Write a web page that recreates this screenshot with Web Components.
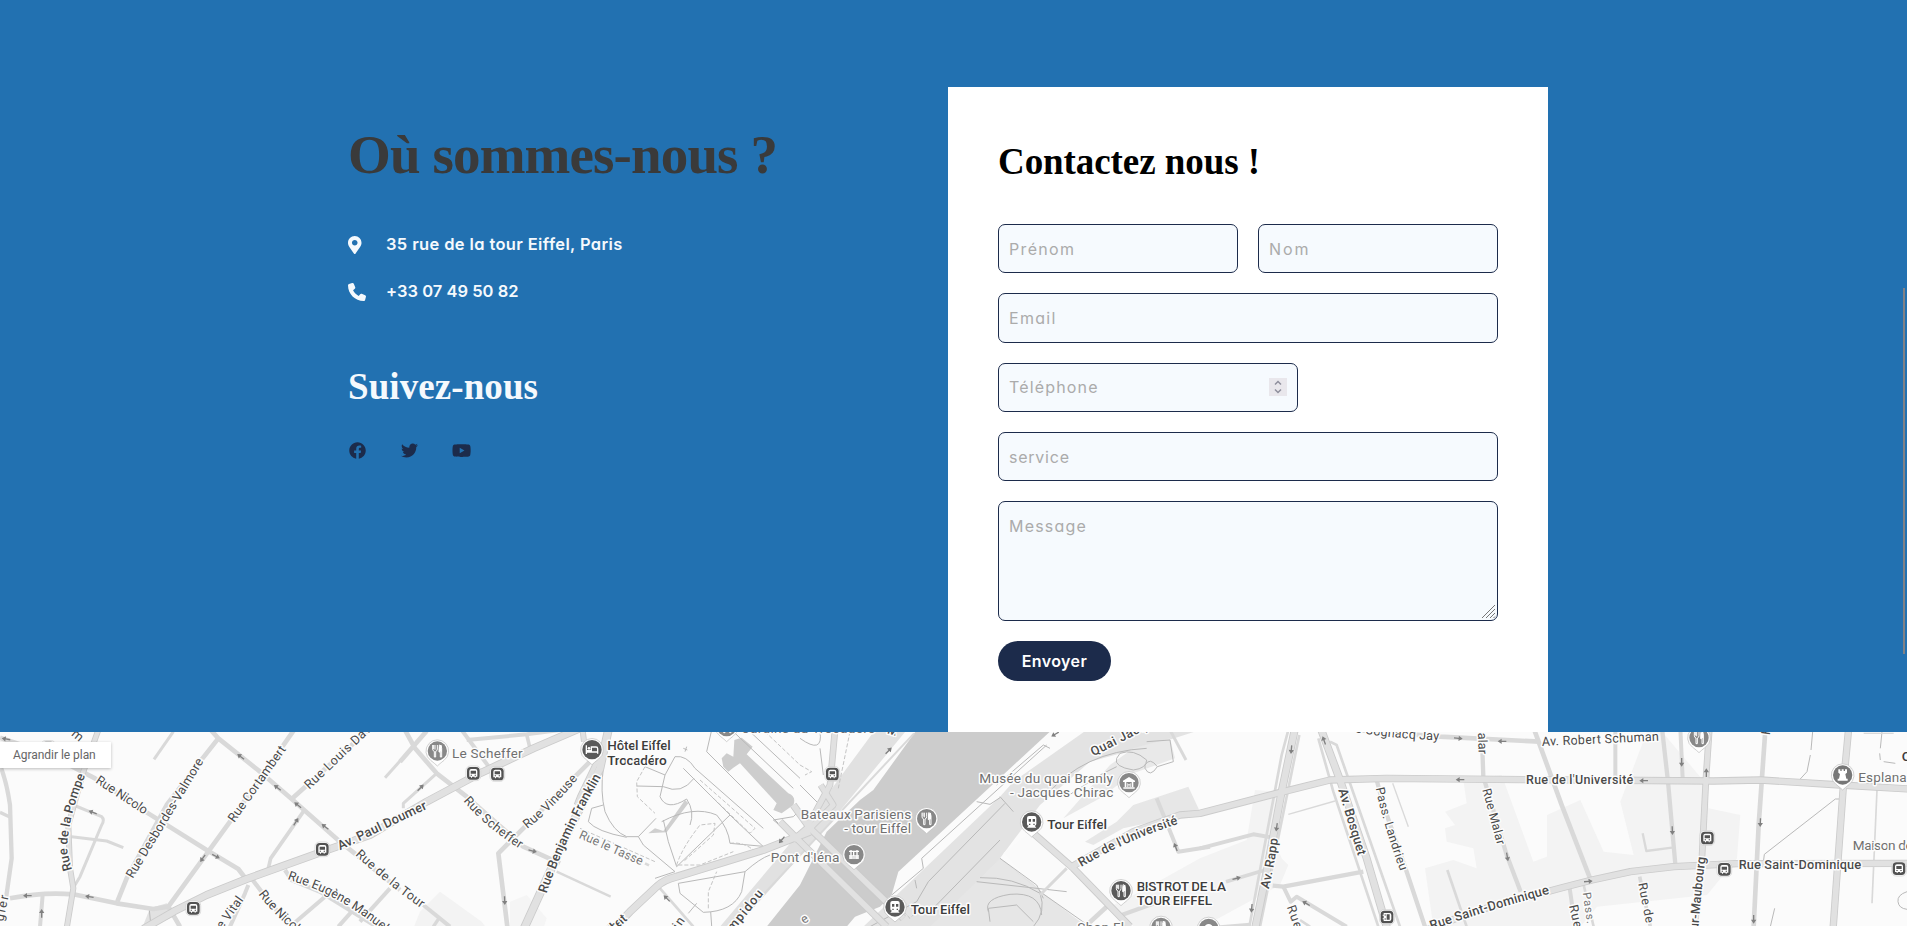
<!DOCTYPE html>
<html lang="fr">
<head>
<meta charset="utf-8">
<title>Contact</title>
<style>
html,body{margin:0;height:100%;overflow:hidden}
body{font-family:Inter,"Open Sans",sans-serif;background:#2271b1}
</style>
</head>
<body>
<contact-page></contact-page>
<script>
const SERIF = '"Liberation Serif",serif';
const SANS = 'Inter,"Open Sans",sans-serif';
const ctx = document.createElement('canvas').getContext('2d');
// Letter spacing that sets a text to a given width.
function tracking(text, font, width) {
  ctx.font = font;
  return ((width - ctx.measureText(text).width) / (text.length - 1)).toFixed(3) + 'px';
}
function define(name, render) {
  customElements.define(name, class extends HTMLElement {
    connectedCallback() {
      if (!this.shadowRoot) this.attachShadow({mode: 'open'}).innerHTML = render(this);
    }
  });
}

define('type-line', el => {
  const serif = el.getAttribute('face') === 'serif';
  const size = el.getAttribute('size'), weight = el.getAttribute('weight');
  const font = `${weight} ${size}px ${serif ? SERIF : SANS}`;
  return `<style>:host{display:block;white-space:nowrap;font:${font};line-height:1;font-feature-settings:"cv11";
    letter-spacing:${tracking(el.textContent, font, +el.getAttribute('width'))}}</style><slot></slot>`;
});

const ICONS = {
  pin: ['0 0 384 512', 'M172.3 501.7C27 291 0 269.4 0 192 0 86 86 0 192 0s192 86 192 192c0 77.400-27 99-172.300 309.700-9.500 13.800-29.900 13.800-39.400 0zM192 272c44.200 0 80-35.800 80-80s-35.800-80-80-80-80 35.800-80 80 35.800 80 80 80z'],
  phone: ['0 0 512 512', 'M164.900 24.600c-7.700-18.600-28-28.500-47.400-23.200l-88 24C12.100 30.200 0 46 0 64c0 247.400 200.600 448 448 448 18 0 33.800-12.100 38.600-29.500l24-88c5.300-19.400-4.600-39.700-23.200-47.400l-96-40c-16.300-6.800-35.200-2.100-46.300 11.600L304.700 368C234.300 334.700 177.300 277.700 144 207.300L193.300 167c13.700-11.200 18.400-30 11.600-46.300l-40-96z'],
  facebook: ['0 0 512 512', 'M504 256C504 119 393 8 256 8S8 119 8 256c0 123.800 90.700 226.400 209.300 245V327.700h-63V256h63v-54.600c0-62.200 37-96.500 93.700-96.500 27.100 0 55.500 4.800 55.500 4.800v61h-31.300c-30.800 0-40.400 19.100-40.400 38.700V256h68.800l-11 71.700h-57.800V501C413.300 482.400 504 379.800 504 256z'],
  twitter: ['0 0 512 512', 'M459.400 151.700c.3 4.500.3 9.100.3 13.600 0 138.700-105.600 298.600-298.600 298.600-59.500 0-114.700-17.200-161.100-47.100 8.400 1 16.600 1.300 25.300 1.300 49.100 0 94.200-16.600 130.300-44.800-46.100-1-84.800-31.200-98.100-72.800 6.500 1 13 1.600 19.800 1.600 9.400 0 18.800-1.300 27.600-3.600-48.100-9.700-84.100-52-84.100-103v-1.300c14 7.800 30.200 12.700 47.400 13.300-28.300-18.800-46.800-51-46.800-87.400 0-19.500 5.200-37.400 14.300-53 51.700 63.700 129.300 105.300 216.400 109.800-1.600-7.800-2.600-15.900-2.600-24 0-57.800 46.800-104.900 104.900-104.900 30.200 0 57.500 12.700 76.700 33.100 23.700-4.500 46.500-13.300 66.600-25.300-7.800 24.400-24.400 44.800-46.100 57.800 21.100-2.300 41.600-8.100 60.400-16.200-14.300 20.800-32.200 39.300-52.600 54.300z'],
  youtube: ['0 0 576 512', 'M549.700 124.100c-6.300-23.700-24.800-42.300-48.300-48.600C458.800 64 288 64 288 64S117.200 64 74.600 75.500c-23.500 6.300-42 24.900-48.300 48.600C14.900 167 14.900 256.400 14.900 256.400s0 89.400 11.400 132.300c6.300 23.700 24.800 41.500 48.300 47.800C117.200 448 288 448 288 448s170.800 0 213.400-11.500c23.500-6.300 42-24.200 48.300-47.800 11.400-42.900 11.400-132.300 11.400-132.300s0-89.400-11.400-132.300zM232.200 337.600V175.200l142.700 81.200-142.700 81.200z']
};
define('glyph-icon', el => {
  const [box, d] = ICONS[el.getAttribute('name')];
  return `<style>:host{display:block;height:${el.getAttribute('size')}px}svg{display:block;height:100%}</style>
  <svg viewBox="${box}" fill="currentColor"><path d="${d}"/></svg>`;
});

define('contact-line', el => `<style>
  :host{display:grid;grid-template-columns:38px auto;align-items:center;height:47px}
</style><glyph-icon name="${el.getAttribute('icon')}" size="18"></glyph-icon><slot></slot>`);

define('company-info', () => `<style>
  :host{display:block;color:#f5f9fd}
  .h1{color:#3a3a3a;padding-top:40px;height:94px}
  .h2{padding-top:53px;height:73px}
  .lines{margin-top:0}
  .social{display:flex;align-items:center;color:#1c2b4b;height:18px;padding-left:1px}
  .social glyph-icon{width:51.5px}
</style>
<div class="h1"><type-line face="serif" weight="bold" size="55" width="430">Où sommes-nous ?</type-line></div>
<div class="lines">
<contact-line icon="pin"><type-line weight="600" size="16.5" width="235">35 rue de la tour Eiffel, Paris</type-line></contact-line>
<contact-line icon="phone"><type-line weight="600" size="16.5" width="132.500">+33 07 49 50 82</type-line></contact-line>
</div>
<div class="h2"><type-line face="serif" weight="bold" size="37" width="190">Suivez-nous</type-line></div>
<div class="social"><glyph-icon name="facebook" size="17"></glyph-icon><glyph-icon name="twitter" size="17"></glyph-icon><glyph-icon name="youtube" size="17"></glyph-icon></div>`);

define('form-field', el => {
  const ph = el.getAttribute('label'), kind = el.getAttribute('kind') || 'text';
  const ls = tracking(ph, `400 16px ${SANS}`, +el.getAttribute('text-width'));
  const common = `placeholder="${ph}" aria-label="${ph}"`;
  const control = kind === 'area' ? `<textarea ${common}></textarea>` : `<input type="text" ${common}>`;
  const extra = kind === 'number'
    ? `<svg width="18" height="18" viewBox="0 0 18 18"><path fill="#e9e7ec" d="M0 0h18v18H0z"/><path d="M6 6.500l3-3 3 3M6 11.500l3 3 3-3" fill="none" stroke="#8f8f9d" stroke-width="1.500"/></svg>`
    : kind === 'area' ? `<svg class="grip" width="15" height="15" viewBox="0 0 15 15"><path d="M1 14L14 1M5 14l9-9M9 14l5-5M12.500 14L14 12.500" fill="none" stroke="#777"/></svg>` : '';
  return `<style>
  :host{display:flex;box-sizing:border-box;align-items:center;height:49.300px;border:1px solid #1c2b4b;border-radius:7px;background:#f6fafe;padding:0 10px}
  :host([kind=area]){height:120px;padding-right:1px}
  input,textarea{flex:1;min-width:0;width:0;border:0;outline:0;padding:0;margin:0;background:none;resize:none;font:400 16px/24px ${SANS};font-feature-settings:"cv11";letter-spacing:${ls}}
  textarea{height:94px}
  ::placeholder{color:#ababab;opacity:1}
  .grip{align-self:flex-end;margin-bottom:1px}
  </style>${control}${extra}`;
});

define('submit-button', () => `<style>
  :host{display:block}
  button{display:flex;align-items:center;justify-content:center;width:113px;height:40px;border:0;border-radius:20px;background:#1c2b4b;color:#fff;padding:0}
</style><button type="button"><slot></slot></button>`);

define('contact-form', () => `<style>
  :host{display:block;box-sizing:border-box;height:645px;padding:56px 50px 0;background:#fff;color:#000}
  .title{height:81px}
  form{display:flex;flex-direction:column;gap:20px}
  .pair{display:grid;grid-template-columns:1fr 1fr;gap:20px}
  .short{width:300px}
</style>
<div class="title"><type-line face="serif" weight="bold" size="37" width="262">Contactez nous !</type-line></div>
<form>
<div class="pair"><form-field label="Prénom" text-width="65"></form-field><form-field label="Nom" text-width="39.500"></form-field></div>
<form-field label="Email" text-width="45.500"></form-field>
<form-field class="short" kind="number" label="Téléphone" text-width="88.500"></form-field>
<form-field label="service" text-width="60"></form-field>
<form-field kind="area" label="Message" text-width="76"></form-field>
<submit-button><type-line weight="600" size="16" width="65">Envoyer</type-line></submit-button>
</form>`);

/* Map data, at three units a pixel; each sheet has its own x origin. */
const SHEETS = [
 {x:0,
  areas:[['M430 600L450 550 500 535 520 575 460 603z','#e2e2e2']],
  minor:[[14,'M630 12L655 40 780 140 875 222 1020 350 1200 495'],[14,'M655 40L600 110 500 240 380 460 352 530'],[14,'M882 15L690 290 505 545'],[14,'M0 38L140 85 285 160 440 262 620 375 715 432 740 465'],[14,'M1105 15L875 222'],[9,'M520 20L462 103'],[11,'M910 260L812 400 805 430'],[13,'M0 120Q20 170 30 240L35 400 18 520'],[10,'M0 262L28 275'],[14,'M30 520Q130 500 220 508L350 535 460 552 505 545 540 605'],[12,'M128 510L120 605'],[9,'M220 240L305 275Q315 285 305 300L240 455 225 480'],[9,'M215 335L320 348 370 368'],[13,'M758 465L800 520 870 605'],[12,'M745 480L735 505 690 605'],[13,'M855 435L875 465 960 500 1130 605'],[12,'M975 515L870 605'],[12,'M1170 490L1080 590'],[12,'M1055 560L1015 605'],[9,'M1200 108L1155 158']],
  major:[[18,'M295 15L250 140 205 300 210 430 220 490 200 610'],[24,'M430 612L520 560 620 510 740 462 990 372 1110 330 1280 230 1440 145 1600 70 1740 10']],
  thin:['M448 555L452 595'],
  arrows:[[18,42,190],[722,95,218],[832,188,218],[893,240,218],[975,305,218],[888,290,-58],[608,400,125],[648,394,28],[278,262,200],[82,512,180],[268,515,190],[125,565,-90]],
  labels:[['Rue de la Pompe','M216 434L202 380Q200 290 256 150',38,500],['Rue Nicolo','M285 172L434 270',38,400],['Rue Desbordes-Valmore','M398 462L612 108',38,400],['Rue Cortambert','M703 294L860 72',38,400],['Rue Louis David','M928 194L1140 -8',38,400],['Av. Paul Doumer','M1020 376L1284 250',39,500],['Rue de la Tour','M1065 390Q1150 470 1264 550',38,400],['Rue Eugène Manuel','M862 462L940 490Q1040 530 1155 622',38,400],['Rue Nicolo','M775 508Q830 580 905 635',38,400],['Rue Vital','M640 652L732 524',38,400],['gier','M10 590L26 512',38,400],['m','M212 30L236 50',38,400]],
  stops:[[967,372],[580,549],[145,68]], pins:[]},
 {x:1200,
  areas:[['M965 100L980 85 1000 95 1003 45 1025 38 1058 65 1040 88 1165 205Q1190 215 1180 240L1145 265 1120 255 1130 235 1020 115 1000 128 985 140 970 125z','#cdcdcd'],['M745 325L765 310 790 318 855 225 865 235 800 322z','#cfcfcf'],['M60 560L120 500 245 590 260 610 40 610z','#f3f3f3'],['M330 530L380 510 440 580 430 610 330 610z','#f5f5f5']],
  minor:[[14,'M15 15L45 70 110 145 200 215 370 365 480 415'],[14,'M0 110L80 18'],[12,'M200 45L380 28 480 15'],[12,'M185 15L270 130'],[11,'M380 28L390 70'],[9,'M110 145L10 235 10 250'],[14,'M570 110L345 335 295 385 322 605'],[7,'M470 440L632 515'],[8,'M780 490L880 605'],[12,'M70 540L150 605'],[10,'M120 575L100 605'],[8,'M735 415L747 421']],
  major:[[18,'M548 15L552 50'],[26,'M625 15L600 130 500 330 370 615'],[18,'M600 90L540 215 530 240'],[24,'M640 612L690 560 770 485Q790 465 830 455L1090 375 1230 320']],
  thin:['M610 130Q600 200 615 260Q640 320 680 335L715 335 768 280','M575 250L565 290Q590 320 680 337M575 250L610 240','M735 125L795 150 780 215Q800 260 860 222Q885 260 870 300','M795 150L825 95Q860 90 885 130L1090 310','M710 183L790 185Q845 210 882 160','M715 335L730 360 825 440 765 460','M790 285L805 350 830 425 990 270','M785 290Q880 240 950 270Q985 310 990 355L1100 365','M850 130L1000 280 1090 365','M935 15L920 80 1150 310 1120 285 1180 275 1200 255','M1000 20L1180 190','M835 475L1035 440 1025 500Q1000 560 910 562L840 505z','M865 565L890 535M932 560L935 603','M850 70L862 75M855 80L860 65','M1035 440Q1080 400 1110 390','M1050 20L1200 160'],
  dashed:['M735 125L710 170 712 215 765 265','M830 420Q845 370 900 300L945 295 940 330 850 410','M900 165L1065 310 1050 325 930 210','M540 310L765 410','M990 355Q1030 350 1060 375','M925 550L925 500 950 440','M1095 20L1200 120','M835 420L900 420 1000 380'],
  arrows:[[62,188,-45],[398,378,15],[314,527,88],[800,520,225],[1145,345,130]],
  labels:[['Rue Scheffer','M190 228Q260 310 360 372',38,400],['Rue Vineuse','M382 312Q460 250 534 160',38,400],['Rue Benjamin Franklin','M440 506Q490 350 604 155',39,500],['Rue le Tasse','M535 338L724 422',37,400,'#777'],['R. Gilbert','M600 655L684 584',38,500],['Jardin','M784 690L856 586',38,400]],
  flat:[['Le Scheffer',156,98,212,0],['Hôtel Eiffel',622,74,190,1],['Trocadéro',622,119,178,1],['Jardins du Trocadéro',1027,24,400,0]],
  stops:[[220,144],[292,146]], pins:[[112,78,'fork','#888'],[576,74,'bed','#5a5a5a'],[980,5,'fork','#888']]},
 {x:2400,
  areas:[['M350 15L755 15 295 440 275 510 240 545 165 575 140 605-100 605 0 480 80 320 180 225 220 195z','#cccccc'],['M225 15L320 15 110 270-190 605-240 605 0 320z','#e1e1e1'],['M1200 15L860 15 640 170 600 215 190 605 870 605 600 400 720 240 870 110 1090 50z','#e3e3e3'],['M600 400L530 470 390 605 870 605 720 500z','#e6e6e6'],['M930 120L1000 70 1110 40 1125 100 1000 145 900 220 790 280z','#e9e9e9'],['M855 350L950 290 1000 240 1165 185 1200 260 970 310 880 360z','#e7e7e7'],['M610 385L690 320 800 430 725 500z','#fafafa'],['M800 435L920 545 860 605 730 505z','#fafafa'],['M1020 500L1200 400 1200 610 1000 603 940 540z','#f3f3f3']],
  minor:[[9,'M800 430L720 510'],[14,'M920 545L855 605'],[12,'M1070 220L1135 380 1230 365'],[9,'M1110 15L1158 105'],[12,'M965 570L1090 525'],[6,'M342 25L-200 605'],[7,'M360 60L620 235'].slice(0,0)].filter(a=>a.length),
  major:[[20,'M105 15L90 180 20 310-20 345'],[20,'M62 180L100 240 20 320'],[22,'M-20 240L30 310 310 580'],[22,'M-60 290L10 360 260 605'],[22,'M700 325L820 430 990 605'],[22,'M815 425L1000 320 1140 270 1200 265 1450 200 1590 165 1760 160 2175 164 2741 168 2881 165 3121 180 3330 192']],
  thin:['M740 60L365 400 370 430 275 510','M615 235L385 470 350 530 210 605','M750 70L730 60 590 180M600 215L640 260M530 230L570 238 600 218','M600 345L380 570','M600 400L710 480 730 520','M530 470L800 500M540 458Q640 455 720 505Q740 560 700 605','M565 560Q550 520 630 508Q720 500 725 570','M570 590L565 550 650 540 700 590','M0 180L60 240M0 40Q70 90 60 20M60 70L70 150','M960 85Q1000 70 1040 105Q1040 130 1000 135Q940 125 950 100z','M1035 120Q1050 95 1072 125Q1050 160 1035 130z','M1040 50L1110 45 1120 110 1072 125M800 215L900 150 950 125M1040 70Q850 80 740 210','M870 605L720 500','M345 465L350 490'],
  dashed:['M150 20L115 190','M310 560L330 580 350 560','M0 120L35 140 15 150'],
  arrows:[[266,77,-45],[765,28,150],[1127,366,250]],
  labels:[['Quai Jacques Chirac','M880 94L1025 20 1225 -52',38,500],['Rue de l\'Université','M844 426Q970 350 1136 296',38,500],['Pompidou','M-235 662L-108 506',38,500],['Av','M262 25L285 32',38,500],['e','M12 598L38 580',38,400,'#777']],
  flat:[['Musée du quai Branly',538,174,401,0],['- Jacques Chirac',630,216,310,0],['Bateaux Parisiens',2,282,332,0],['- tour Eiffel',133,324,200,0],['Pont d\'Iéna',-88,411,206,0],['Tour Eiffel',742,312,179,1],['Tour Eiffel',332,567,178,1],['BISTROT DE LA',1010,498,268,1],['TOUR EIFFEL',1010,540,226,1],['Shop Fl',832,620,140,0]],
  stops:[[97,146]], pins:[[380,281,'fork','#888'],[162,389,'bridge','#888'],[695,291,'train','#5a5a5a'],[285,546,'train','#5a5a5a'],[987,173,'museum','#888'],[963,497,'fork','#5a5a5a'],[1083,607,'fork','#888'],[1226,610,'round','#888']]},
 {x:3600,
  areas:[['M165 195L240 200 220 340 245 400 265 420 240 480 0 610 0 400 140 345z','#f3f3f3'],['M735 260L800 235 790 165 905 150 1000 410 1080 380 1080 605 700 605 675 430 760 405 830 430 820 370 740 350 735 310 765 300z','#f3f3f3']],
  minor:[[12,'M0 370L160 328 220 338'],[8,'M265 15L245 90 148 605'],[8,'M298 30L180 605'],[8,'M355 40L400 200 535 605'],[8,'M390 50L410 60 600 605'],[13,'M530 165L550 240 620 440 675 605'],[4,'M578 175L625 305'],[13,'M845 15L850 155 920 390 962 500'],[14,'M430 12L720 35 1020 50'],[14,'M1003 15L1085 240 1171 462'],[13,'M218 482L250 485 490 440'],[12,'M250 485L272 530 290 515 440 605'],[4,'M265 268L405 228'],[8,'M742 435L800 605'],[11,'M78 470L195 435'],[9,'M60 605L150 598'],[8,'M300 585L330 605']],
  major:[[24,'M285 10L245 200 200 440 165 612'],[24,'M362 10L420 165 500 400 562 612'],[22,'M680 615L820 560 1080 490 1176 465 1291 440 1421 425 1611 416 2130 415']],
  thin:[],
  arrows:[[274,74,95],[372,46,-110],[230,307,98],[110,460,-15],[155,550,95],[318,535,210],[780,164,180],[775,40,5],[906,49,180],[922,396,80]],
  labels:[['Av. Rapp','M206 492Q222 430 234 340',38,500],['Av. Bosquet','M415 195L474 394',39,500],['Pass. Landrieu','M527 190Q550 300 601 440',37,400],['Rue Malar','M847 194L892 362',37,400],['Malar','M833 -10L836 88',38,400],['Rue Cognacq Jay','M420 14Q560 40 718 46',38,400],['Rue Saint-Dominique','M695 615Q850 560 1050 506',39,500],['Rue de l\'Université','M978 178L1301 178',38,500],['Av. Robert Schuman','M1026 63L1378 47',38,400],['Rue','M260 546L285 615',38,400]],
  stops:[[562,576,1]], pins:[]},
 {x:4641,
  areas:[['M0 270L100 225 170 380 260 390 220 230 300 20 345 20 480 180 485 250 580 270 570 400 480 510 150 545 100 605 0 605z','#f3f3f3']],
  minor:[[13,'M345 10L363 170 385 418'],[12,'M400 10L407 160'],[12,'M205 15L205 155'],[14,'M655 15L635 300 620 605'],[5,'M990 195L975 535'],[7,'M287 325L298 378 375 368'],[11,'M278 455L310 605'],[12,'M68 490L85 605'],[8,'M110 480L140 605'],[9,'M460 430L450 605'],[4,'M950 25L1040 25']],
  major:[[20,'M487 10L477 160 465 395'],[22,'M905 10L890 170 858 615']],
  thin:['M797 20L792 75M790 90L780 140 757 165','M880 222L865 222 652 388 650 405','M1005 20L1000 70M998 85L1000 105M1010 110L1045 115','M683 550L670 605','M1080 500Q1050 510 1053 530Q1055 550 1080 553'],
  arrows:[[404,112,90],[478,143,-90],[290,167,180],[376,317,88],[640,293,92],[620,583,90],[124,469,-5]],
  labels:[['Rue Saint-Dominique','M575 432L944 432',39,500],['Latour-Maubourg','M450 690Q455 560 476 396',38,500],['Rue de l\'Exp','M274 476Q290 560 315 690',37,400],['Pass. J','M107 503L125 630',34,400,'#777'],['Rue','M66 542L82 612',38,400],['F','M668 31L671 10',38,400]],
  flat:[['Esplanade',934,171,190,0],['Maison de',917,375,180,0],['Q',1064,108,32,1]],
  stops:[[481,338],[532,432],[1056,430]], pins:[[456,38,'fork','#888'],[887,150,'rook','#777']]}
];
const PIN_ART = {
 fork:'<path d="M-14-18v12q0 6 5 7v17h4V1q5-1 5-7v-12M-7-18v14M-11-18v12M6-18q7 0 7 10v26h-4V3H5z" fill="none" stroke="#fff" stroke-width="3"/><path d="M5 3v-15q2-6 8-6v20z" fill="#fff"/>',
 bed:'<path d="M-17-13v26M-17 7h34M17 12V-3q0-5-5-5H-2V3h-15" fill="none" stroke="#fff" stroke-width="4"/><circle cx="-9" cy="-4" r="4" fill="#fff"/>',
 train:'<path d="M-14-12q0-6 6-6H8q6 0 6 6v18q0 5-5 5l5 6H-14l5-6q-5 0-5-5z" fill="#fff"/><path d="M-9-9h7v8h-7zM3-9h7v8H3zM-8 5h4v4h-4zM5 5h4v4H5z" fill="#555"/>',
 bridge:'<path d="M-15-10h30M-9-14v27M9-14v27M-15 4h30M-15 10h30M-1-10v14" fill="none" stroke="#fff" stroke-width="4"/>',
 museum:'<path d="M-18-6L0-17 18-6v4h-36zM-17 14h34v4h-34zM-13-2h5v15h-5zM8-2h5v15H8zM-5 13V1l5 5 5-5v12H2V8h-4v5z" fill="#fff"/>',
 rook:'<path d="M-13-17h6v5h4v-5h6v5h4v-5h6V-7l-5 4 3 14h4v6h-30v-6h4l3-14-5-4z" fill="#fff"/>',
 round:'<circle r="13" fill="#fff"/>'
};
define('paris-map', () => {
  const each = f => SHEETS.map((s, i) => `<g transform="translate(${s.x} 0)">${f(s, i)}</g>`).join('');
  const stroke = (d, c, w, more = '') => `<path d="${d}" fill="none" stroke="${c}" stroke-width="${w}" stroke-linejoin="round" ${more}/>`;
  const halo = 'paint-order="stroke" stroke="#fcfcfc" stroke-width="9" stroke-linejoin="round"';
  ctx.font = '400 38px Roboto';
  const len = d => { const p = document.createElementNS('http://www.w3.org/2000/svg', 'path'); p.setAttribute('d', d); return p.getTotalLength(); };
  const label = ([t, d, size, w, c = '#4a4a4a'], id) => { const l = len(d);
    return `<path id="${id}" d="${d}" fill="none"/><text font-size="${size}" font-weight="${w}" fill="${c}" ${halo} textLength="${(l - 1).toFixed(1)}"><textPath href="#${id}" textLength="${(l - 1).toFixed(1)}">${t}</textPath></text>`; };
  return `<style>
  :host{display:block;position:relative;height:194px;background:#fbfbfb;overflow:hidden;font-family:Roboto,sans-serif}
  svg{display:block;width:1907px;height:194px}
  .open{position:absolute;left:0;top:10px;display:flex;align-items:center;box-sizing:border-box;width:111px;height:26px;padding-left:13px;background:#fff;box-shadow:0 1px 3px rgba(0,0,0,.25);color:#666;font-size:12px;letter-spacing:-.04px}
  </style><svg viewBox="0 21 5721 582">
  ${each(s => s.areas.map(([d, c]) => `<path d="${d}" fill="${c}"/>`).join(''))}
  ${each(s => s.thin.map(d => stroke(d, '#b9b9b9', 3)).join('') + (s.dashed || []).map(d => stroke(d, '#c4c4c4', 3, 'stroke-dasharray="12 6"')).join(''))}
  ${each(s => s.minor.map(([w, d]) => stroke(d, '#d9d9d9', w)).join(''))}
  ${each(s => s.major.map(([w, d]) => stroke(d, '#cbcbcb', w)).join(''))}
  ${each(s => s.major.map(([w, d]) => stroke(d, '#e1e1e1', w - 5)).join(''))}
  ${each(s => s.arrows.map(([x, y, a]) => `<path transform="translate(${x} ${y}) rotate(${a})" d="M-13-2H1v-6L13 0 1 8V2h-14z" fill="#808080"/>`).join(''))}
  ${each((s, i) => s.labels.map((l, j) => label(l, `way${i}-${j}`)).join(''))}
  ${each(s => s.stops.map(([x, y, r]) => `<g transform="translate(${x} ${y})${r ? ' rotate(90)' : ''}"><rect x="-22" y="-21" width="44" height="44" rx="13" fill="#fff" stroke="#ccc" stroke-width="2"/><rect x="-19" y="-18" width="38" height="38" rx="11" fill="#525252"/><path d="M-12-6q0-6 6-6H6q6 0 6 6v17H7v3H4v-3H-4v3h-3v-3h-5z" fill="#fff"/><path d="M-8-7H8V2H-8zM-8 5h4v3h-4zM4 5h4v3H4z" fill="#525252"/></g>`).join(''))}
  ${each(s => s.pins.map(([x, y, k, c]) => `<g transform="translate(${x} ${y})"><path d="M0 45Q-6 39-20 28A34 34 0 1 1 20 28Q6 39 0 45z" fill="#fff" stroke="#bbb" stroke-width="2"/><circle r="29" fill="${c}"/>${PIN_ART[k]}</g>`).join(''))}
  ${each(s => (s.flat || []).map(([t, x, y, w, b]) => `<text x="${x}" y="${y}" font-size="41" font-weight="${b ? 500 : 400}" fill="${b ? '#3c3c3c' : '#707070'}" ${halo} textLength="${w}">${t}</text>`).join(''))}
  </svg><div class="open">Agrandir le plan</div>`;
});

define('contact-page', () => `<style>
  :host{display:flex;flex-direction:column;width:1907px;height:926px;position:relative;overflow:hidden}
  .band{display:grid;grid-template-columns:600px 600px;box-sizing:border-box;height:732px;padding:87px 0 0 348px;background:#2271b1}
  .thumb{position:absolute;left:1903px;top:288px;width:2px;height:366px;background:#818286}
</style><div class="band"><company-info></company-info><contact-form></contact-form></div><paris-map></paris-map><div class="thumb"></div>`);
</script>
</body>
</html>
